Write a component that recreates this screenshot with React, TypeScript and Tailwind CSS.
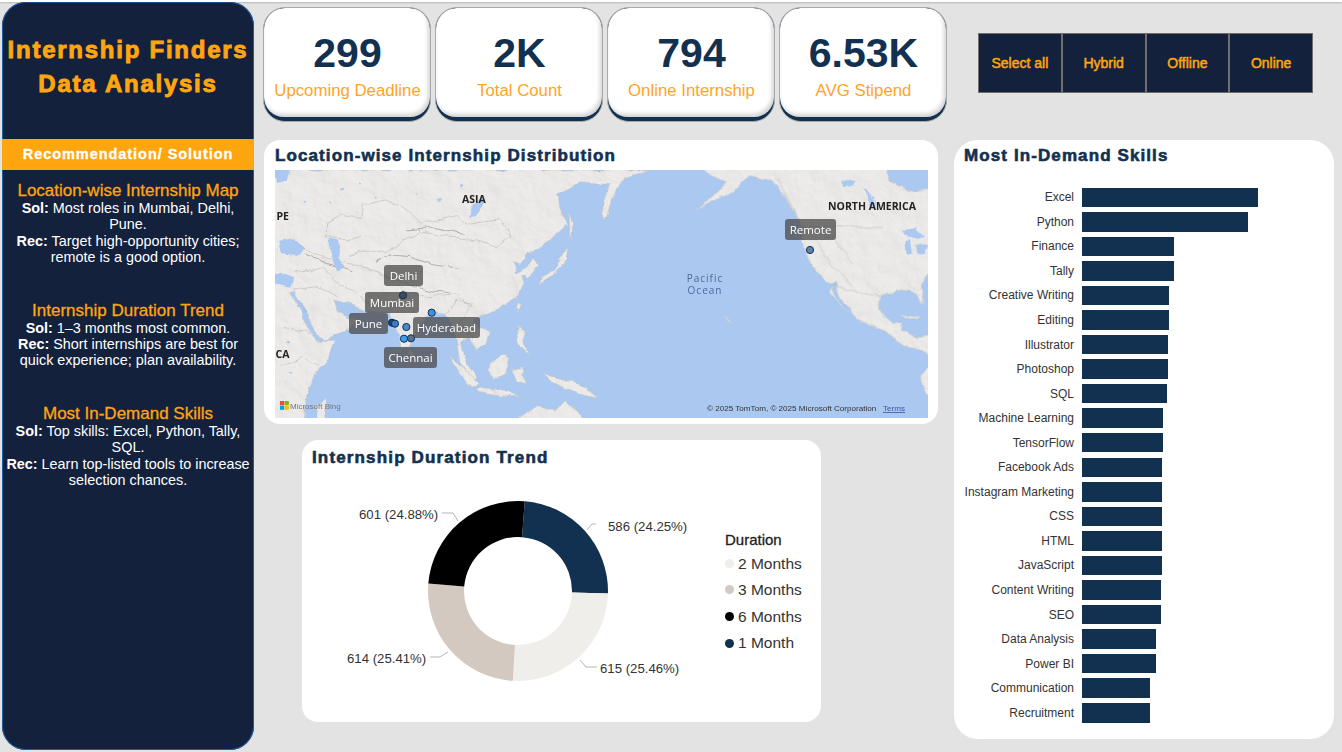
import React from 'react';

const KPIS = [
  { value: '299', label: 'Upcoming Deadline' },
  { value: '2K', label: 'Total Count' },
  { value: '794', label: 'Online Internship' },
  { value: '6.53K', label: 'AVG Stipend' },
];

const SLICERS = ['Select all', 'Hybrid', 'Offline', 'Online'];

const SKILLS: [string, number][] = [
  ['Excel', 176], ['Python', 166], ['Finance', 91.5], ['Tally', 91.5], ['Creative Writing', 86.5],
  ['Editing', 86.5], ['Illustrator', 85.5], ['Photoshop', 85.5], ['SQL', 85], ['Machine Learning', 81],
  ['TensorFlow', 81], ['Facebook Ads', 80.3], ['Instagram Marketing', 80.3], ['CSS', 79.5], ['HTML', 79.5],
  ['JavaScript', 79.5], ['Content Writing', 78.7], ['SEO', 78.7], ['Data Analysis', 73.7], ['Power BI', 73.7],
  ['Communication', 68.3], ['Recruitment', 68.3],
];

const NOTES = [
  {
    title: 'Location-wise Internship Map',
    sol: 'Most roles in Mumbai, Delhi, Pune.',
    rec: 'Target high-opportunity cities; remote is a good option.',
    gap: 'mt-[11px]',
  },
  {
    title: 'Internship Duration Trend',
    sol: '1–3 months most common.',
    rec: 'Short internships are best for quick experience; plan availability.',
    gap: 'mt-[35px]',
  },
  {
    title: 'Most In-Demand Skills',
    sol: 'Top skills: Excel, Python, Tally, SQL.',
    rec: 'Learn top-listed tools to increase selection chances.',
    gap: 'mt-[35px]',
  },
];

const SLICES = [
  { value: 24.25, color: '#12304f' },
  { value: 25.46, color: '#efeeeb' },
  { value: 25.41, color: '#d3c9c0' },
  { value: 24.88, color: '#000000' },
];

const LEGEND = [
  { name: '2 Months', dot: 'bg-[#efeeeb]' },
  { name: '3 Months', dot: 'bg-[#d3c9c0]' },
  { name: '6 Months', dot: 'bg-black' },
  { name: '1 Month', dot: 'bg-[#12304f]' },
];

const slicePath = (from: number, to: number) => {
  const cx = 518;
  const cy = 591;
  const R = 90;
  const r = 54;
  const pt = (rad: number, pct: number) => {
    const a = ((pct / 100) * 360 + 4.3 - 90) * (Math.PI / 180);
    return `${(cx + rad * Math.cos(a)).toFixed(2)} ${(cy + rad * Math.sin(a)).toFixed(2)}`;
  };
  return `M${pt(R, from)} A${R} ${R} 0 0 1 ${pt(R, to)} L${pt(r, to)} A${r} ${r} 0 0 0 ${pt(r, from)} Z`;
};

const Donut = () => {
  let acc = 0;
  return (
    <svg viewBox="302 474 420 248" className="w-[420px] h-[248px] shrink-0">
      {SLICES.map((s) => {
        const d = slicePath(acc, acc + s.value);
        acc += s.value;
        return <path key={s.color} d={d} fill={s.color} />;
      })}
      <g fill="none" stroke="#b5b5b5" strokeWidth="1">
        <path d="M442 513 H453 L458 521" />
        <path d="M596 524 H592 L587 530" />
        <path d="M430 657 H440 L448 652" />
        <path d="M597 667 H586 L580 660" />
      </g>
      <g fontSize="13.2" fill="#333">
        <text x="359" y="518.5">601 (24.88%)</text>
        <text x="608" y="530.5">586 (24.25%)</text>
        <text x="347" y="663">614 (25.41%)</text>
        <text x="600" y="672.5">615 (25.46%)</text>
      </g>
    </svg>
  );
};

// coasts in the coords of the 3x crop, asia/africa group
const ASIA_LAND = [
  'M0 90 L1160 90 L1090 115 L1060 170 L1035 240 L1025 200 L1050 130 L960 125 L890 165 L905 215 L920 255 L880 290 L850 320 L800 340 L775 372 L755 365 L772 398 L800 382 L815 350 L832 380 L810 415 L785 405 L792 432 L770 472 L720 502 L680 520 L640 542 L665 565 L690 580 L680 610 L650 630 L625 592 L600 612 L612 650 L650 718 L640 722 L600 662 L590 610 L578 545 L560 522 L520 518 L500 530 L472 565 L450 618 L430 622 L410 570 L385 520 L350 515 L322 512 L262 490 L215 480 L228 510 L260 530 L292 540 L262 570 L200 600 L178 592 L140 525 L100 452 L92 452 L125 532 L168 603 L225 605 L215 640 L175 692 L140 760 L130 860 L0 860 Z',
  'M925 210 L938 250 L935 295 L925 260 Z',
  'M838 432 L880 405 L905 372 L925 350 L918 322 L905 345 L885 390 L845 412 Z',
  'M447 625 L460 640 L452 650 L444 640 Z',
  'M770 490 L780 492 L774 512 L766 505 Z',
  'M770 560 L790 570 L795 610 L805 640 L785 620 L772 590 Z',
  'M570 652 L620 690 L655 735 L640 740 L600 700 Z',
  'M650 745 L720 752 L780 770 L720 768 L655 757 Z',
  'M680 690 L700 665 L735 645 L750 660 L735 700 L700 712 Z',
  'M760 690 L790 680 L785 705 L800 735 L770 725 Z',
  'M850 705 L900 715 L960 730 L1010 770 L960 760 L920 745 L870 725 Z',
  'M780 835 L830 800 L880 810 L920 790 L950 810 L1000 860 L780 860 Z',
  'M170 800 L200 770 L195 860 L165 860 Z',
];

const ASIA_WATER = [
  'M0 400 L60 402 L100 415 L92 440 L60 432 L0 438 Z',
  'M52 308 L100 300 L140 322 L110 345 L60 340 Z',
  'M205 296 L228 300 L240 340 L252 385 L228 392 L218 350 Z',
  'M640 195 L668 170 L672 195 L648 228 L630 232 Z',
  'M45 90 L90 90 L80 120 L55 130 Z',
];

const AMERICA_LAND = [
  'M300 80 L340 112 L380 130 L290 205 L400 152 L440 110 L520 125 L560 180 L600 240 L615 330 L640 390 L690 432 L705 425 L725 475 L775 540 L830 565 L880 590 L930 625 L990 640 L990 585 L945 590 L900 570 L905 545 L880 550 L850 525 L835 490 L845 465 L890 450 L950 462 L972 492 L960 440 L990 395 L990 150 L930 150 L870 122 L860 80 Z',
  'M700 440 L715 490 L745 520 L715 495 L695 455 Z',
  'M905 522 L960 535 L945 540 L910 530 Z',
  'M990 675 L965 710 L975 760 L990 770 Z',
  'M375 530 L392 545 L380 540 Z',
];

const AMERICA_WATER = [
  'M905 270 L950 265 L975 290 L955 300 L925 290 Z',
  'M915 305 L930 300 L935 340 L920 345 Z',
  'M945 320 L985 315 L975 340 L950 345 Z',
  'M720 125 L770 122 L760 140 L730 140 Z',
  'M790 140 L805 150 L830 200 L815 195 Z',
];

const LAKES: [number, number, number][] = [
  [245, 150, 4], [215, 190, 3], [540, 180, 5], [480, 270, 3], [605, 140, 5], [135, 185, 3],
  [300, 130, 3], [350, 170, 3], [470, 160, 3], [110, 500, 3], [85, 610, 5], [90, 700, 4], [930, 160, 3],
];

const WorldMap = () => (
  <svg viewBox="0 0 653 248" className="w-[653px] h-[248px] block bg-[#abc8f1]">
    <defs>
      <filter id="coast" x="-5%" y="-5%" width="110%" height="110%">
        <feTurbulence type="fractalNoise" baseFrequency="0.06" numOctaves="4" seed="4" />
        <feDisplacementMap in="SourceGraphic" scale="7" xChannelSelector="R" yChannelSelector="G" />
        <feGaussianBlur stdDeviation="0.3" />
      </filter>
      <filter id="relief" x="0" y="0" width="100%" height="100%">
        <feTurbulence type="fractalNoise" baseFrequency="0.05" numOctaves="5" seed="9" result="n" />
        <feDiffuseLighting in="n" surfaceScale="2.2" lightingColor="#ffffff" result="l">
          <feDistantLight azimuth="315" elevation="62" />
        </feDiffuseLighting>
        <feComposite in="l" in2="SourceAlpha" operator="in" />
      </filter>
    </defs>
    <g filter="url(#coast)">
      <g transform="translate(-15 -30) scale(0.3333)">
        {ASIA_LAND.map((d) => (
          <path key={d} d={d} fill="#eeedeb" stroke="#d2cec7" strokeWidth="2" strokeLinejoin="round" />
        ))}
        <g fill="none" stroke="#b9b5ae" strokeWidth="1.6" strokeLinejoin="round">
          <path d="M195 250 L240 225 L300 235 L310 195 L375 180 L420 200 L480 250 L530 240 L590 230 L625 250 L720 240 L755 290 L710 320 L650 300 L560 290 L480 275 L430 300 L380 340 L310 330 L270 345" />
          <path d="M120 320 L180 350 L280 370 L340 390 L400 420 L430 455 L500 470 L590 465 L640 500" />
          <path d="M200 250 L195 290 L260 300 L300 290" />
          <path d="M100 450 L170 440 L230 470 M105 400 L190 380 L220 420 L300 470 L350 510" />
          <path d="M70 560 L140 570 L175 610 M60 680 L130 650 L175 680" />
          <path d="M560 520 L590 480 L640 490 L600 540 L640 600" />
        </g>
        <g fill="none" stroke="#96938e" strokeWidth="2" strokeLinejoin="round">
          <path d="M345 370 L390 345 L450 350 L520 375 L600 385" />
          <path d="M370 400 L440 430 L500 450 L560 462" />
          <path d="M440 270 L520 262 L610 280" />
          <path d="M130 340 L200 370 L280 395" />
        </g>
      </g>
      <g transform="translate(325 -30) scale(0.3333)">
        {AMERICA_LAND.map((d) => (
          <path key={d} d={d} fill="#eeedeb" stroke="#d2cec7" strokeWidth="2" strokeLinejoin="round" />
        ))}
        <g fill="none" stroke="#b9b5ae" strokeWidth="1.6">
          <path d="M600 260 L850 262" />
          <path d="M690 432 L790 460 L850 470" />
          <path d="M530 120 L570 190 L600 240" />
          <path d="M640 290 L690 370 L760 440 M700 290 L760 370" />
        </g>
      </g>
    </g>
    {/* hillshade over the land only */}
    <g filter="url(#relief)" opacity="0.3" className="mix-blend-multiply">
      <g transform="translate(-15 -30) scale(0.3333)">
        {ASIA_LAND.map((d) => (
          <path key={d} d={d} />
        ))}
      </g>
      <g transform="translate(325 -30) scale(0.3333)">
        {AMERICA_LAND.map((d) => (
          <path key={d} d={d} />
        ))}
      </g>
    </g>
    <g filter="url(#coast)" fill="#abc8f1">
      <g transform="translate(-15 -30) scale(0.3333)">
        {ASIA_WATER.map((d) => (
          <path key={d} d={d} />
        ))}
        {LAKES.map(([cx, cy, r]) => (
          <circle key={`${cx}-${cy}`} cx={cx} cy={cy} r={r} />
        ))}
      </g>
      <g transform="translate(325 -30) scale(0.3333)">
        {AMERICA_WATER.map((d) => (
          <path key={d} d={d} />
        ))}
      </g>
    </g>
    <g fontFamily="'Open Sans', sans-serif" fontWeight="700" fontSize="10.5" fill="#222">
      <text x="187" y="33">ASIA</text>
      <text x="1.5" y="50">PE</text>
      <text x="0.5" y="188">CA</text>
      <text x="553" y="40">NORTH AMERICA</text>
    </g>
    <g fontFamily="'Open Sans', sans-serif" fontSize="10" fill="#4a6a9f" textAnchor="middle" letterSpacing="1">
      <text x="430" y="112">Pacific</text>
      <text x="430" y="124">Ocean</text>
    </g>
    <g>
      <rect x="5" y="231" width="4.2" height="4.2" fill="#f25022" />
      <rect x="9.6" y="231" width="4.2" height="4.2" fill="#7fba00" />
      <rect x="5" y="235.6" width="4.2" height="4.2" fill="#00a4ef" />
      <rect x="9.6" y="235.6" width="4.2" height="4.2" fill="#ffb900" />
      <text x="15" y="239" fontSize="8" fill="#6f7680">Microsoft Bing</text>
    </g>
    <text x="432" y="241" fontSize="8.1" fill="#333">© 2025 TomTom, © 2025 Microsoft Corporation</text>
    <text x="608" y="241" fontSize="8.1" fill="#3a56a8" textDecoration="underline">Terms</text>
  </svg>
);

const MapDots = () => (
  <svg viewBox="0 0 653 248" className="absolute inset-0 w-[653px] h-[248px]">
    <g stroke="#12304f" strokeWidth="1">
      <circle cx="128" cy="125.3" r="3.6" fill="#3d4a62" />
      <circle cx="117" cy="152.7" r="3.6" fill="#1f3f6e" />
      <circle cx="120" cy="153.7" r="3.6" fill="#3d7cc9" />
      <circle cx="131.3" cy="157" r="3.6" fill="#4f86c6" />
      <circle cx="156.7" cy="142.7" r="3.6" fill="#3f8fe6" />
      <circle cx="129" cy="168.7" r="3.6" fill="#3b9cf0" />
      <circle cx="136" cy="168.3" r="3.6" fill="#56708f" />
      <circle cx="535" cy="80" r="3.6" fill="#5f82ad" />
    </g>
  </svg>
);

const Tag = ({ className, children }: { className: string; children: React.ReactNode }) => (
  <div className={`absolute h-[21px] rounded-[3px] bg-[#4a4a4a]/75 text-white text-[11.5px] font-['Open_Sans',sans-serif] flex items-center justify-center ${className}`}>
    {children}
  </div>
);

export default function App() {
  return (
    <div className="w-[1342px] h-[752px] overflow-hidden bg-[#e3e3e3] font-['Liberation_Sans',Arial,sans-serif]">
      <div className="relative h-[2px] bg-white shadow-[0_1px_2px_rgba(0,0,0,0.2)]" />
      <div className="flex pl-[2px]">
        {/* Sidebar */}
        <aside className="w-[252px] h-[748px] shrink-0 bg-[#14213d] rounded-[24px] shadow-[inset_0_0_0_1px_#1b5ca3] overflow-hidden">
          <div className="h-[137px] pt-[31px] text-center text-[#ffa50f] text-[24px] leading-[34px] font-bold tracking-[1.75px] [-webkit-text-stroke:0.9px_#ffa50f]">
            <div>Internship Finders</div>
            <div>Data Analysis</div>
          </div>
          <div className="h-[31px] bg-[#ffa50f] flex items-center justify-center text-white text-[14.5px] font-bold tracking-[0.95px] [-webkit-text-stroke:0.3px_#ffffff]">
            Recommendation/ Solution
          </div>
          {NOTES.map((n) => (
            <div key={n.title} className={`${n.gap} px-[2px] text-center text-white text-[14.4px] leading-[16.4px]`}>
              <div className="h-[19px] text-[#ffa50f] text-[17px] leading-[19px] [-webkit-text-stroke:0.3px_#ffa50f]">{n.title}</div>
              <div>
                <b>Sol:</b> {n.sol}
              </div>
              <div>
                <b>Rec:</b> {n.rec}
              </div>
            </div>
          ))}
        </aside>

        {/* Centre column */}
        <main className="w-[684px] ml-[9px] shrink-0 pt-[5px]">
          <div className="flex gap-[4px]">
            {KPIS.map((k) => (
              <div key={k.label} className="w-[168px] h-[115px] rounded-[22px] bg-[#12304f] border border-[#a9a9a9] overflow-hidden">
                <div className="h-[109px] rounded-[20px] bg-white shadow-[inset_-2px_-3px_4px_rgba(0,0,0,0.18)] flex flex-col items-center pt-[20px] pl-px">
                  <div className="text-[41px] leading-[50px] font-bold text-[#12304f]">{k.value}</div>
                  <div className="mt-[2px] text-[16.8px] leading-[22px] text-[#ffa51f]">{k.label}</div>
                </div>
              </div>
            ))}
          </div>

          <section className="ml-[1px] mt-[18px] w-[674px] h-[284px] bg-white rounded-[16px] px-[11px]">
            <h2 className="h-[30px] leading-[32px] text-[17px] font-bold tracking-[1.1px] text-[#12304f] [-webkit-text-stroke:0.6px_#12304f]">
              Location-wise Internship Distribution
            </h2>
            <div className="relative w-[653px] h-[248px] overflow-hidden">
              <WorldMap />
              <Tag className="left-[109px] top-[95px] w-[39px]">Delhi</Tag>
              <Tag className="left-[90px] top-[122px] w-[54px]">Mumbai</Tag>
              <Tag className="left-[74px] top-[143px] w-[39px]">Pune</Tag>
              <Tag className="left-[138px] top-[147px] w-[67px]">Hyderabad</Tag>
              <Tag className="left-[109px] top-[177px] w-[53px]">Chennai</Tag>
              <Tag className="left-[510px] top-[49px] w-[51px]">Remote</Tag>
              <MapDots />
            </div>
          </section>

          <section className="ml-[39px] mt-[16px] w-[519px] h-[282px] bg-white rounded-[16px]">
            <h2 className="h-[34px] pl-[10px] leading-[36px] text-[17px] font-bold tracking-[1.15px] text-[#12304f] [-webkit-text-stroke:0.6px_#12304f]">
              Internship Duration Trend
            </h2>
            <div className="flex">
              <Donut />
              <div className="ml-[3px] pt-[56px]">
                <div className="text-[15px] leading-[20px] text-[#222] [-webkit-text-stroke:0.3px_#222]">Duration</div>
                <div>
                  {LEGEND.map((l) => (
                    <div key={l.name} className="flex items-center h-[26.6px] text-[15.5px] text-[#333]">
                      <span className={`w-[9px] h-[9px] rounded-full ${l.dot}`} />
                      <span className="ml-[4px]">{l.name}</span>
                    </div>
                  ))}
                </div>
              </div>
            </div>
          </section>
        </main>

        {/* Right column */}
        <div className="flex-1 pl-[7px]">
          <div className="ml-[24px] mt-[31px] flex h-[60px] w-[335px]">
            {SLICERS.map((s) => (
              <button key={s} className="flex-1 bg-[#14213d] border border-[#6f6f6f] text-[#ffa50f] text-[14px] [-webkit-text-stroke:0.5px_#ffa50f]">
                {s}
              </button>
            ))}
          </div>

          <section className="mt-[47px] w-[380px] h-[599px] bg-white rounded-[24px] pl-[10px]">
            <h2 className="h-[30px] leading-[32px] text-[17px] font-bold tracking-[1.1px] text-[#12304f] [-webkit-text-stroke:0.6px_#12304f]">
              Most In-Demand Skills
            </h2>
            <div className="pt-[15px]">
              {SKILLS.map(([name, w]) => (
                <div key={name} className="flex items-center h-[24.56px]">
                  <div className="w-[110px] text-right text-[12px] text-[#333] whitespace-nowrap">{name}</div>
                  <div className="ml-[8px] h-[19.5px] bg-[#12304f]" style={{ width: w }} />
                </div>
              ))}
            </div>
          </section>
        </div>
      </div>
    </div>
  );
}
